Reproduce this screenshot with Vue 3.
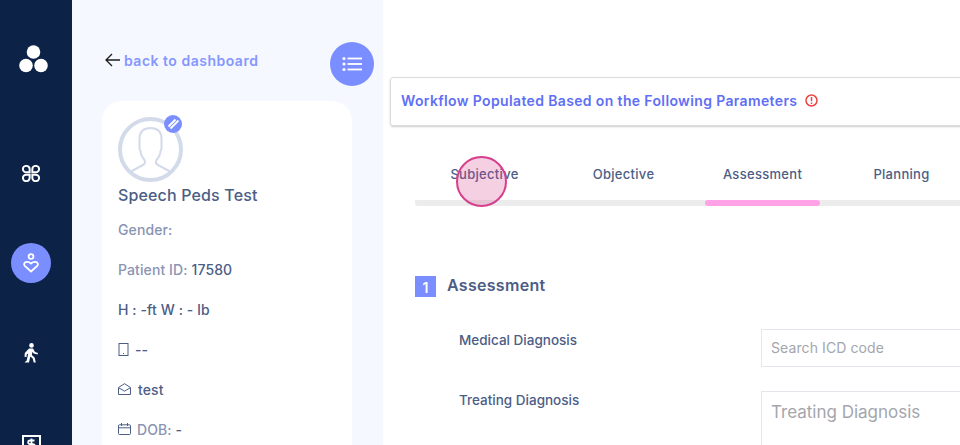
<template>
  <div class="page">
    <aside class="rail">
      <div class="rail-item rail-logo">
        <svg width="29" height="28" viewBox="0 0 29 28" fill="#fff">
          <circle cx="14.500" cy="7" r="6.800" />
          <circle cx="7" cy="20.500" r="6.800" />
          <circle cx="22" cy="20.500" r="6.800" />
        </svg>
      </div>
      <div class="rail-item">
        <svg width="18" height="17" viewBox="0 0 20 20" preserveAspectRatio="none" fill="none" stroke="#fff" stroke-width="2.200">
          <path d="M8.500 8.500V4.750a3.750 3.750 0 1 0-3.750 3.750z" />
          <path d="M11.500 8.500V4.750a3.750 3.750 0 1 1 3.750 3.750z" />
          <path d="M8.500 11.500v3.750a3.750 3.750 0 1 1-3.750-3.750z" />
          <path d="M11.500 11.500v3.750a3.750 3.750 0 1 0 3.750-3.750z" />
        </svg>
      </div>
      <div class="rail-item">
        <div class="rail-active">
          <svg width="16" height="20" viewBox="0 0 16 20" fill="none" stroke="#fff" stroke-width="1.800">
            <circle cx="8" cy="3.500" r="2.400" />
            <path d="M8 18.500 2 13.200C.2 11.400 1.400 8.800 3.800 8.800c1.800 0 3.400.8 4.200 1.800.8-1 2.400-1.800 4.200-1.800 2.400 0 3.600 2.600 1.800 4.400z" stroke-linejoin="round" />
          </svg>
        </div>
      </div>
      <div class="rail-item">
        <svg width="16" height="20" viewBox="0 0 16 20" fill="#fff">
          <circle cx="8.500" cy="2.400" r="2.300" />
          <path d="M6 5.500h4l2 3.500 3 1-.5 1.600-3.800-1.200-1.200-1.700-.7 3.300 2.800 2.600 1.200 5h-2.100l-1-4.200-2.400-2-1.300 6.200H3.200l-1.700-.1 2.200-1.900 1.500-7-1.500.8-.2 2.600-2-.2.300-3.800z" />
        </svg>
      </div>
      <div class="rail-item">
        <svg class="rail-money" width="19" height="18" viewBox="0 0 19 18" fill="none" stroke="#fff">
          <rect x="1" y="1" width="17" height="16" stroke-width="2" />
          <path d="M12.500 5.500H8a1.800 1.800 0 0 0 0 3.600h3a1.800 1.800 0 0 1 0 3.600H6.500M9.500 3.500v11" stroke-width="1.800" />
        </svg>
      </div>
    </aside>

    <section class="panel">
      <div class="panel-top">
        <a class="back">
          <svg width="15" height="14" viewBox="0 0 15 14" fill="none" stroke="#1c1c1c" stroke-width="1.300">
            <path d="M15 7H1M7 1 1 7l6 6" />
          </svg>
          back to dashboard
        </a>
        <button class="menu-btn">
          <svg width="20" height="16" viewBox="0 0 20 16" fill="#fff">
            <circle cx="2" cy="2.500" r="1.600" />
            <circle cx="2" cy="8" r="1.600" />
            <circle cx="2" cy="13.500" r="1.600" />
            <rect x="5.500" y="1.600" width="14.500" height="1.800" />
            <rect x="5.500" y="7.100" width="14.500" height="1.800" />
            <rect x="5.500" y="12.600" width="14.500" height="1.800" />
          </svg>
        </button>
      </div>

      <div class="card">
        <div class="avatar">
          <svg width="65" height="65" viewBox="0 0 65 65" fill="none" stroke="#d3daea">
            <circle cx="32.500" cy="32.500" r="30.500" stroke-width="4" />
            <path d="M13 54.500 25 48c2-1 2.500-3 1.500-5-2.500-3-4-6-4-9l-1-2V22c0-8 5-11 11-11s11 3 11 11v10l-1 2c0 3-1.500 6-4 9-1 2-.5 4 1.500 5l12 6.500" stroke-width="2" />
          </svg>
          <span class="avatar-edit">
            <svg width="14" height="14" viewBox="0 0 14 14" fill="none" stroke="#fff" stroke-width="1.800">
              <path d="M2.500 9.500 9.500 2.500M4.500 11.500 12.500 3.500" />
            </svg>
          </span>
        </div>
        <h2 class="name">Speech Peds Test</h2>
        <ul class="facts">
          <li class="muted">Gender:</li>
          <li><span class="muted">Patient ID:</span> 17580</li>
          <li>H : -ft W : - lb</li>
          <li>
            <svg width="11" height="13" viewBox="0 0 11 13" fill="none" stroke="#4c5d86">
              <rect x="1" y=".5" width="9" height="12" />
              <path d="M5 10.500h1" />
            </svg>
            <span class="gap-text">--</span>
          </li>
          <li>
            <svg width="13" height="12" viewBox="0 0 13 12" fill="none" stroke="#4c5d86">
              <path d="M.5 4.500 6.500.7l6 3.800v7h-12zM.8 4.800l5.700 3.400 5.700-3.400" />
            </svg>
            <span class="gap-text wide">test</span>
          </li>
          <li>
            <svg width="13" height="12" viewBox="0 0 13 12" fill="none" stroke="#4c5d86">
              <rect x=".5" y="1.800" width="12" height="9.700" rx="1" />
              <path d="M.5 4.800h12M3.500 0v3M9.500 0v3" />
            </svg>
            <span class="gap-text"><span class="muted">DOB:</span> -</span>
          </li>
        </ul>
      </div>
    </section>

    <main class="main">
      <div class="notice">
        Workflow Populated Based on the Following Parameters
        <svg width="13" height="13" viewBox="0 0 13 13" fill="none" stroke="#ef4444" stroke-width="1.500">
          <circle cx="6.500" cy="6.500" r="5.500" />
          <path d="M6.500 3v4.200M6.500 8.500v1.500" />
        </svg>
      </div>

      <nav class="tabs">
        <div v-for="tab in tabs" :key="tab" class="tab" :class="{ active: tab === 'Assessment' }">{{ tab }}</div>
      </nav>

      <div class="section-head">
        <span class="section-num">1</span>
        <h3>Assessment</h3>
      </div>

      <div class="field">
        <label>Medical Diagnosis</label>
        <div class="input">Search ICD code</div>
      </div>
      <div class="field">
        <label>Treating Diagnosis</label>
        <div class="input area">Treating Diagnosis</div>
      </div>
    </main>

    <div class="tap"></div>
  </div>
</template>

<script setup>
const tabs = ['Subjective', 'Objective', 'Assessment', 'Planning']
</script>

<style>
body { margin: 0; }
</style>

<style scoped>
.page {
  position: relative;
  display: flex;
  width: 960px;
  height: 445px;
  overflow: hidden;
  background: #fff;
  font-family: Inter, "Noto Sans", sans-serif;
  color: #4c5d86;
}
.rail {
  flex: none;
  box-sizing: border-box;
  width: 72px;
  height: 445px;
  padding: 14px 10px 0 0;
  background: #0c2246;
}
.rail-item {
  display: flex;
  align-items: center;
  justify-content: center;
  height: 90px;
}
.rail-logo {
  margin-bottom: 24px;
  padding-left: 5px;
}
.rail-active {
  display: flex;
  align-items: center;
  justify-content: center;
  width: 40px;
  height: 40px;
  border-radius: 50%;
  background: #7b8eff;
}
.rail-money {
  margin-top: 1px;
}
.panel {
  flex: none;
  box-sizing: border-box;
  width: 311px;
  height: 445px;
  padding: 42px 9px 0 30px;
  background: #f5f8ff;
}
.panel-top {
  display: flex;
  align-items: center;
  justify-content: space-between;
  height: 44px;
  margin-bottom: 15px;
}
.back {
  display: flex;
  align-items: center;
  gap: 4px;
  padding-left: 3px;
  margin-top: -8px;
  color: #8596ff;
  font-size: 14px;
  font-weight: 600;
  letter-spacing: .5px;
}
.menu-btn {
  display: flex;
  align-items: center;
  justify-content: center;
  width: 44px;
  height: 44px;
  padding: 0;
  border: 0;
  border-radius: 50%;
  background: #7b8eff;
}
.card {
  box-sizing: border-box;
  width: 250px;
  height: 400px;
  padding: 16px;
  background: #fff;
  border-radius: 20px;
}
.avatar {
  position: relative;
  width: 65px;
  height: 65px;
}
.avatar svg { display: block; }
.avatar-edit {
  position: absolute;
  top: -2px;
  right: 1px;
  display: flex;
  align-items: center;
  justify-content: center;
  width: 18px;
  height: 18px;
  border-radius: 50%;
  background: #7b8eff;
}
.name {
  margin: 1px 0 0;
  color: #4c5d86;
  font-size: 16px;
  font-weight: 500;
  letter-spacing: .15px;
  line-height: 24px;
}
.facts {
  margin: 2px 0 0;
  padding: 0;
  list-style: none;
  font-size: 14px;
  font-weight: 500;
  letter-spacing: .1px;
}
.facts li {
  display: flex;
  align-items: center;
  gap: 4px;
  height: 40px;
}
.muted { color: #8a94b3; }
.gap-text { margin-left: 2px; }
.gap-text.wide { margin-left: 3px; }
.main {
  flex: none;
  width: 577px;
  padding-top: 77px;
}
.notice {
  display: flex;
  align-items: center;
  gap: 8px;
  box-sizing: border-box;
  width: 620px;
  height: 49px;
  margin-left: 7px;
  padding: 0 0 2px 10px;
  border: 1px solid #dcdcdc;
  border-radius: 3px;
  box-shadow: 0 1px 2px rgba(0, 0, 0, .2);
  color: #5f6ff5;
  font-size: 14px;
  font-weight: 600;
  letter-spacing: .36px;
}
.tabs {
  display: flex;
  width: 700px;
  margin: 32px 0 0 32px;
  background: linear-gradient(#ececec, #ececec) bottom / 100% 6px no-repeat;
  border-radius: 3px;
}
.tab {
  position: relative;
  flex: none;
  width: 139px;
  height: 48px;
  padding-top: 6px;
  box-sizing: border-box;
  font-size: 13px;
  font-weight: 500;
  letter-spacing: .3px;
  text-align: center;
  line-height: 20px;
}
.tab.active::after {
  content: "";
  position: absolute;
  left: 12px;
  right: 12px;
  bottom: 0;
  height: 6px;
  border-radius: 3px;
  background: #ffa3e6;
}
.section-head {
  display: flex;
  align-items: center;
  gap: 11px;
  margin: 70px 0 0 32px;
}
.section-head h3 {
  margin: -2px 0 0;
  color: #4c5d86;
  font-size: 16px;
  font-weight: 600;
  letter-spacing: .3px;
  line-height: 21px;
}
.section-num {
  width: 21px;
  height: 21px;
  background: #7b8eff;
  color: #fff;
  font-size: 14px;
  font-weight: 600;
  line-height: 23px;
  text-align: center;
}
.field {
  display: flex;
  margin-top: 32px;
  padding-left: 76px;
}
.field + .field { margin-top: 24px; }
.field label {
  flex: none;
  width: 302px;
  color: #4c5d86;
  font-size: 13.500px;
  font-weight: 500;
  line-height: 22px;
}
.field + .field label { margin-top: -2px; }
.input {
  flex: none;
  box-sizing: border-box;
  width: 300px;
  height: 38px;
  padding-left: 9px;
  border: 1px solid #e4e6ec;
  color: #a3a6ad;
  font-size: 14px;
  letter-spacing: .1px;
  line-height: 36px;
}
.input.area {
  height: 90px;
  font-size: 17px;
  letter-spacing: 0;
  line-height: 40px;
}
.tap {
  position: absolute;
  left: 456px;
  top: 156px;
  box-sizing: border-box;
  width: 51px;
  height: 51px;
  border: 2px solid #d63f8c;
  border-radius: 50%;
  background: rgba(214, 63, 140, .25);
}
</style>
